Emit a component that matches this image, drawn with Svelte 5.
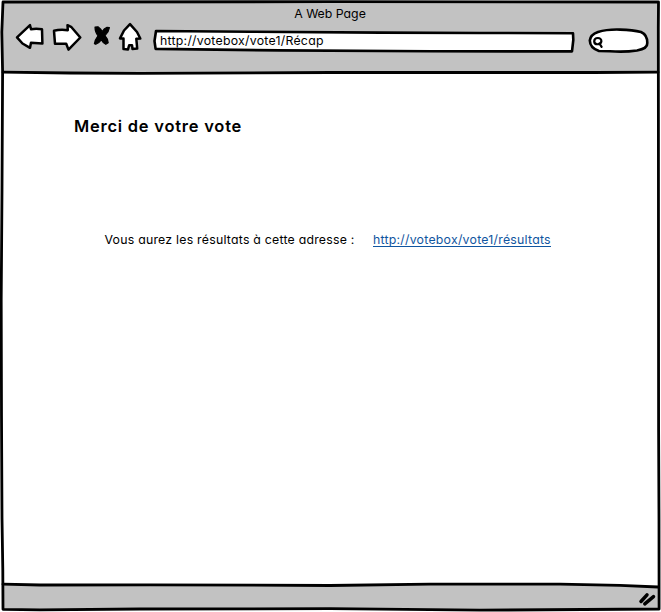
<script>
  const title = 'A Web Page';
  const address = 'http://votebox/vote1/Récap';
  const resultsUrl = 'http://votebox/vote1/résultats';
</script>

<div class="window">
  <svg class="outline" viewBox="0 0 661 612" aria-hidden="true">
    <path class="chrome" d="M2 2H659V72L330 73 140 72.5 3 72Z" />
    <path class="chrome" d="M3 584.5 150 585 480 584 560 584 620 585.5 659 587V609H3Z" />
    <path class="edge" d="M3 2 330 1.7 658.5 2 658.3 28 658.4 120 658.6 430 659 520 659.1 609 480 610.2 330 608.7 140 609 40 609.8 3 609.3 2.8 570 2 518 1.5 416 1.2 300 2 190 2.6 72 1.8 32Z" />
    <path class="edge" d="M3 72.2 70 73 140 73.4 330 72.5 594 72.5 658 72.2" />
    <path class="edge" d="M3 584.2 40 585 150 584.8 330 585.5 430 584.2 560 584.2 620 585.4 658 587" />
  </svg>

  <header>
    <div class="title">{title}</div>
    <div class="toolbar">
      <svg class="nav" viewBox="14 20 130 34" aria-hidden="true">
        <path d="M17 37.3 30 25.2 31 29.3Q36 28.3 42 29.3L42.4 43.5 31 42.8 30 47.8 22.5 43.5Z" />
        <path d="M54 30.8Q60 29.2 67.8 30.2L67.5 25.2 71.5 27.2 80.3 37.5 68.5 49.6 66.2 43.8 55 43.8Z" />
        <path d="M130 24.2 124 30.5 120 38.4 123.5 38.6 123.5 49 128 49.4 129.2 45.2 132 45.2 132.5 49 137.2 48.5 136.3 38.7 140.3 38.5 137 32Z" />
        <path class="ink" d="M95 27 98 26.8Q100.8 28.6 102 31.8 104 28.5 107 27.3L109.4 27.6Q108.8 32 105 35.6 108 38.8 108.2 42.8L105.8 44.3Q102.8 42.8 101.2 39.8 99.2 42.8 95.8 44.3L94.4 43.8Q94.6 40.2 98 35.8 95 32 95 27Z" />
      </svg>
      <div class="address">
        <svg viewBox="153 29 422 25" aria-hidden="true">
          <path d="M156 31 250 31.7 380 32.6 480 33 573 33.2 573.3 40 572 51.4 430 51.3 280 50.4 155.6 48.9 154.5 41Z" />
        </svg>
        <span>{address}</span>
      </div>
      <svg class="search" viewBox="587 27 63 28" aria-hidden="true">
        <path d="M598 32Q607 29.2 620 29.6T641 32Q647.5 35 647.3 43 647.7 48.5 637 50.5 625 52.3 610 51.3L599 51Q590 48 589.8 40.5 590.4 34.7 598 32Z" />
        <path class="lens" d="M594.2 41.4C594.2 37 601.5 36.8 601.4 41.2 601 45 594.4 45.4 594.2 41.4M599.4 43.5 601.6 46.9" />
      </svg>
    </div>
  </header>

  <main>
    <h1>Merci de votre vote</h1>
    <p>
      <span class="label">Vous aurez les résultats à cette adresse :</span>
      <a href={resultsUrl}>{resultsUrl}</a>
    </p>
  </main>

  <footer>
    <svg viewBox="637 590 20 18" aria-hidden="true">
      <path d="M641 601.5 647 594.8M644.8 603.8 653.5 596.6" />
    </svg>
  </footer>
</div>

<style>
  :global(body) {
    margin: 0;
    background: #fff;
  }
  .window {
    position: relative;
    display: flex;
    flex-direction: column;
    width: 661px;
    height: 612px;
    overflow: hidden;
    color: #000;
    font-family: Inter, Lato, sans-serif;
    font-size: 12.3px;
    font-weight: 430;
    font-feature-settings: 'cv11', 'calt' 0;
  }
  .outline {
    position: absolute;
    inset: 0;
    width: 661px;
    height: 612px;
  }
  svg {
    fill: #fff;
    stroke: #000;
    stroke-width: 2.6;
    stroke-linejoin: round;
    stroke-linecap: round;
    display: block;
    flex: none;
  }
  .chrome {
    fill: #c2c2c2;
    stroke: none;
  }
  .edge {
    fill: none;
    stroke-width: 2.8;
  }
  header,
  main,
  footer {
    position: relative;
  }
  header {
    height: 73px;
  }
  .title {
    height: 20px;
    padding: 6px 1px 0 0;
    box-sizing: border-box;
    line-height: 16px;
    text-align: center;
    font-weight: 400;
  }
  .toolbar {
    display: flex;
    align-items: flex-start;
    padding-left: 14px;
  }
  .nav {
    width: 130px;
    height: 34px;
  }
  .nav path {
    stroke-width: 2.5;
  }
  .nav .ink {
    fill: #000;
    stroke-width: 1.2;
  }
  .address {
    display: grid;
    margin: 9px 12px 0 9px;
  }
  .address > * {
    grid-area: 1 / 1;
  }
  .address svg {
    width: 422px;
    height: 25px;
  }
  .address span {
    position: relative;
    padding: 4px 0 0 7px;
    line-height: 16px;
    white-space: nowrap;
    letter-spacing: 0.26px;
  }
  .search {
    width: 63px;
    height: 28px;
    margin-top: 7px;
  }
  .search .lens {
    stroke-width: 2.2;
  }
  main {
    height: 512px;
    padding: 42px 0 0 74px;
    box-sizing: border-box;
  }
  h1 {
    margin: 0;
    font-size: 16.5px;
    font-weight: 560;
    line-height: 23px;
    white-space: nowrap;
    letter-spacing: 0.76px;
  }
  p {
    display: flex;
    align-items: flex-start;
    margin: 94px 0 0 30.5px;
    line-height: 15px;
    white-space: nowrap;
  }
  .label {
    width: 268.5px;
    letter-spacing: 0.24px;
  }
  a {
    height: 14px;
    color: #1055a0;
    border-bottom: 1px solid #1055a0;
    text-decoration: none;
    letter-spacing: 0.25px;
  }
  footer {
    display: flex;
    flex: 1;
    padding: 5px 4px 0 0;
    justify-content: flex-end;
  }
  footer svg {
    width: 20px;
    height: 18px;
    stroke-width: 3.5;
  }
</style>
